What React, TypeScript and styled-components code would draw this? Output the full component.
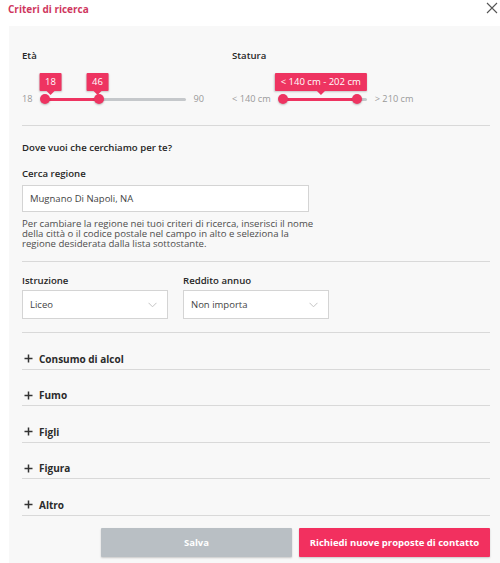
import React from "react";
import styled, { createGlobalStyle } from "styled-components";

const Global = createGlobalStyle`
  html, body { margin: 0; padding: 0; background: #ffffff; }
  body { font-family: "Open Sans", "Noto Sans", sans-serif; color: #2b2b2b; }
  * { box-sizing: border-box; }
`;

const PINK = "#ee3461";

const Modal = styled.div`
  width: 500px;
  display: flex;
  flex-direction: column;
`;

const Header = styled.header`
  height: 26px;
  display: flex;
  align-items: flex-start;
  justify-content: space-between;
  padding: 2px 2px 0 8px;
`;

const Title = styled.h1`
  margin: 0;
  font-size: 10px;
  line-height: 14px;
  font-weight: 700;
  color: #cf3760;
`;

const CloseBtn = styled.button`
  border: 0;
  background: transparent;
  padding: 0;
  width: 12px;
  height: 12px;
  display: flex;
  cursor: pointer;
`;

const Panel = styled.div`
  margin-left: 9px;
  background: #f8f8f8;
  padding: 23px 10px 6px 13px;
  display: flex;
  flex-direction: column;
`;

const SliderSection = styled.section`
  display: flex;
  gap: 28px;
  padding-bottom: 20px;
  border-bottom: 1px solid #d9d9d9;
`;

const SliderGroup = styled.div`
  display: flex;
  flex-direction: column;
`;

const Label = styled.div`
  font-size: 9.6px;
  line-height: 14px;
  font-weight: 600;
  color: #262626;
`;

const SliderRow = styled.div`
  margin-top: 30px;
  display: flex;
  align-items: center;
  height: 12px;
`;

const RangeText = styled.span<{ $gapRight?: number }>`
  font-size: 9.2px;
  color: #9a9a9a;
  line-height: 12px;
  margin-right: ${(p) => p.$gapRight ?? 0}px;
`;

const Track = styled.div<{ $w: number }>`
  position: relative;
  width: ${(p) => p.$w}px;
  height: 3px;
  background: #c5c8cb;
  border-radius: 2px;
  margin-right: 8px;
`;

const Fill = styled.div`
  position: absolute;
  top: 0;
  height: 3px;
  background: ${PINK};
`;

const Thumb = styled.div`
  position: absolute;
  top: 50%;
  width: 10px;
  height: 10px;
  margin: -5px 0 0 -5px;
  border-radius: 50%;
  background: ${PINK};
  box-shadow: 0 1px 2px rgba(0, 0, 0, 0.25);
`;

const Tip = styled.div`
  position: absolute;
  bottom: 10px;
  transform: translateX(-50%);
  height: 18px;
  padding: 0 6px;
  background: ${PINK};
  color: #fff;
  font-size: 9.5px;
  line-height: 18px;
  white-space: nowrap;
  border-radius: 1px;
  box-shadow: 0 1px 2px rgba(0, 0, 0, 0.2);
  &::after {
    content: "";
    position: absolute;
    left: 50%;
    bottom: -4px;
    margin-left: -4px;
    border-left: 4px solid transparent;
    border-right: 4px solid transparent;
    border-top: 4px solid ${PINK};
  }
`;

const Section = styled.section`
  display: flex;
  flex-direction: column;
  border-bottom: 1px solid #d9d9d9;
`;

const RegionSection = styled(Section)`
  padding: 15px 0 12px;
`;

const Question = styled(Label)`
  margin-bottom: 12px;
`;

const FieldLabel = styled(Label)`
  margin-bottom: 4px;
`;

const Input = styled.input`
  width: 287px;
  height: 27px;
  border: 1px solid #d4d4d4;
  background: #fff;
  padding: 0 7px;
  font-family: inherit;
  font-size: 9.5px;
  color: #444;
  outline: none;
`;

const Help = styled.p`
  margin: 7px 0 0;
  width: 300px;
  font-size: 9.6px;
  line-height: 10px;
  color: #4d4d4d;
`;

const SelectSection = styled(Section)`
  flex-direction: row;
  gap: 15px;
  padding: 12px 0 13px;
`;

const Field = styled.div`
  display: flex;
  flex-direction: column;
`;

const SelectBox = styled.div`
  width: 146px;
  height: 29px;
  margin-top: 2px;
  border: 1px solid #d4d4d4;
  background: #fff;
  display: flex;
  align-items: center;
  justify-content: space-between;
  padding: 0 10px 0 7px;
  font-size: 9.5px;
  color: #444;
`;

const AccRow = styled.div`
  display: flex;
  align-items: center;
  gap: 6px;
  padding: 18.5px 0 3px 2px;
  border-bottom: 1px solid #d9d9d9;
  font-size: 10px;
  line-height: 14px;
  font-weight: 700;
  color: #2b2b2b;
`;

const Actions = styled.div`
  display: flex;
  justify-content: flex-end;
  gap: 7px;
  margin-top: 12px;
`;

const Button = styled.button<{ $primary?: boolean }>`
  width: 191px;
  height: 29px;
  border: 0;
  border-radius: 1px;
  background: ${(p) => (p.$primary ? "#f2305f" : "#b9bfc4")};
  color: #fff;
  font-family: inherit;
  font-size: 9.5px;
  font-weight: 700;
  box-shadow: 0 1px 2px rgba(0, 0, 0, 0.2);
`;

const Chevron = () => (
  <svg width="9" height="6" viewBox="0 0 9 6" fill="none">
    <path d="M0.5 0.8 L4.5 4.8 L8.5 0.8" stroke="#c4c4c4" strokeWidth="1" />
  </svg>
);

const Plus = () => (
  <svg width="9" height="9" viewBox="0 0 9 9">
    <path d="M4.5 0.5 V8.5 M0.5 4.5 H8.5" stroke="#333" strokeWidth="1.5" />
  </svg>
);

type RangeProps = {
  min: number;
  max: number;
  lo: number;
  hi: number;
  width: number;
  tips: { text: string; at: number }[];
};

const RangeSlider = ({ min, max, lo, hi, width, tips }: RangeProps) => {
  const pLo = ((lo - min) / (max - min)) * 100;
  const pHi = ((hi - min) / (max - min)) * 100;
  return (
    <Track $w={width}>
      <Fill style={{ left: `${pLo}%`, width: `${pHi - pLo}%` }} />
      <Thumb style={{ left: `${pLo}%` }} />
      <Thumb style={{ left: `${pHi}%` }} />
      {tips.map((t) => (
        <Tip key={t.text} style={{ left: `${t.at}px` }}>
          {t.text}
        </Tip>
      ))}
    </Track>
  );
};

const accItems = ["Consumo di alcol", "Fumo", "Figli", "Figura", "Altro"];

export default function App() {
  return (
    <>
      <Global />
      <Modal>
        <Header>
          <Title>Criteri di ricerca</Title>
          <CloseBtn aria-label="Chiudi">
            <svg width="12" height="12" viewBox="0 0 12 12">
              <path d="M1 1 L11 11 M11 1 L1 11" stroke="#555" strokeWidth="1.1" />
            </svg>
          </CloseBtn>
        </Header>
        <Panel>
          <SliderSection>
            <SliderGroup>
              <Label>Età</Label>
              <SliderRow>
                <RangeText $gapRight={12}>18</RangeText>
                <RangeSlider
                  min={18}
                  max={90}
                  lo={18}
                  hi={46}
                  width={141}
                  tips={[
                    { text: "18", at: 6 },
                    { text: "46", at: 53 },
                  ]}
                />
                <RangeText>90</RangeText>
              </SliderRow>
            </SliderGroup>
            <SliderGroup>
              <Label>Statura</Label>
              <SliderRow>
                <RangeText $gapRight={12}>&lt; 140 cm</RangeText>
                <RangeSlider
                  min={140}
                  max={210}
                  lo={140}
                  hi={202}
                  width={84}
                  tips={[{ text: "< 140 cm - 202 cm", at: 38 }]}
                />
                <RangeText>&gt; 210 cm</RangeText>
              </SliderRow>
            </SliderGroup>
          </SliderSection>

          <RegionSection>
            <Question>Dove vuoi che cerchiamo per te?</Question>
            <FieldLabel>Cerca regione</FieldLabel>
            <Input defaultValue="Mugnano Di Napoli, NA" />
            <Help>
              Per cambiare la regione nei tuoi criteri di ricerca, inserisci il nome della
              città o il codice postale nel campo in alto e seleziona la regione desiderata
              dalla lista sottostante.
            </Help>
          </RegionSection>

          <SelectSection>
            <Field>
              <Label>Istruzione</Label>
              <SelectBox>
                <span>Liceo</span>
                <Chevron />
              </SelectBox>
            </Field>
            <Field>
              <Label>Reddito annuo</Label>
              <SelectBox>
                <span>Non importa</span>
                <Chevron />
              </SelectBox>
            </Field>
          </SelectSection>

          {accItems.map((item) => (
            <AccRow key={item}>
              <Plus />
              {item}
            </AccRow>
          ))}

          <Actions>
            <Button>Salva</Button>
            <Button $primary>Richiedi nuove proposte di contatto</Button>
          </Actions>
        </Panel>
      </Modal>
    </>
  );
}
